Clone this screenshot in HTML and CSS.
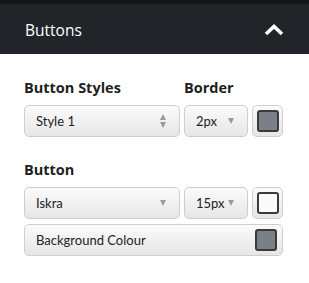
FILE: index.html
```html
<!DOCTYPE html>
<html lang="en">
<head>
    <meta charset="UTF-8">
    <title>Buttons</title>
    <link rel="stylesheet" href="styles.css">
</head>
<body>
    <div class="panel">
        <div class="panel-header">
            <span class="panel-title">Buttons</span>
            <svg class="chevron" width="20" height="12" viewBox="0 0 20 12">
                <path d="M2 10 L10 2.5 L18 10" fill="none" stroke="#fff" stroke-width="3.6" stroke-linejoin="miter"/>
            </svg>
        </div>

        <div class="section">
            <div class="field-grid">
                <label class="field-label">Button Styles</label>
                <label class="field-label">Border</label>
                <span></span>

                <div class="select">
                    <span>Style 1</span>
                    <span class="updown"><i class="up"></i><i class="down"></i></span>
                </div>
                <div class="select">
                    <span>2px</span>
                    <i class="down"></i>
                </div>
                <div class="swatch-btn"><span class="swatch grey"></span></div>
            </div>
        </div>

        <div class="section">
            <div class="field-grid">
                <label class="field-label full">Button</label>

                <div class="select">
                    <span>Iskra</span>
                    <i class="down"></i>
                </div>
                <div class="select">
                    <span>15px</span>
                    <i class="down"></i>
                </div>
                <div class="swatch-btn"><span class="swatch white"></span></div>

                <div class="select full">
                    <span>Background Colour</span>
                    <span class="swatch grey"></span>
                </div>
            </div>
        </div>
    </div>
</body>
</html>
```

FILE: styles.css
```css
body {
    margin: 0;
    font-family: Lato, "Open Sans", sans-serif;
    background-color: #fff;
    color: #1d1f22;
}
.panel-header {
    height: 50px;
    border-top: 4px solid #13171a;
    background-color: #212529;
    display: flex;
    align-items: center;
    justify-content: space-between;
    padding: 0 25px 0 25px;
}
.panel-title {
    font-family: "Open Sans", sans-serif;
    font-size: 15.5px;
    color: #fff;
    padding-top: 1px;
}
.chevron {
    display: block;
    margin-top: 1px;
}
.section {
    padding: 25px 26px 0 24px;
}
.section + .section {
    padding-top: 24px;
}
.field-grid {
    display: grid;
    grid-template-columns: 156px 64px 31px;
    column-gap: 4px;
    row-gap: 5px;
}
.field-label {
    font-family: "Open Sans", sans-serif;
    font-size: 14.5px;
    font-weight: bold;
    line-height: 18px;
    margin-bottom: 3px;
}
.full {
    grid-column: 1 / -1;
}
.select {
    height: 30px;
    border: 1px solid #cfcfcf;
    border-radius: 5px;
    background: linear-gradient(#fbfbfb, #e6e6e6);
    display: flex;
    align-items: center;
    justify-content: space-between;
    padding: 0 12px 0 11px;
    font-size: 13px;
    color: #222;
}
.down, .up {
    display: block;
    width: 0;
    height: 0;
    border-left: 3.5px solid transparent;
    border-right: 3.5px solid transparent;
}
.down {
    border-top: 6px solid #9a9a9a;
}
.up {
    border-bottom: 6px solid #9a9a9a;
    margin-bottom: 2px;
}
.select .down {
    margin-right: 1px;
}
.updown {
    display: flex;
    flex-direction: column;
}
.swatch-btn {
    height: 30px;
    border: 1px solid #cfcfcf;
    border-radius: 5px;
    background: linear-gradient(#fbfbfb, #e6e6e6);
    display: flex;
    align-items: center;
    justify-content: center;
}
.swatch {
    display: block;
    width: 18px;
    height: 18px;
    border: 2px solid #3a3a3a;
    border-radius: 3px;
}
.swatch.grey {
    background-color: #7b8088;
}
.swatch.white {
    background-color: #fafafa;
}
.select .swatch {
    margin-right: -7px;
}
```
